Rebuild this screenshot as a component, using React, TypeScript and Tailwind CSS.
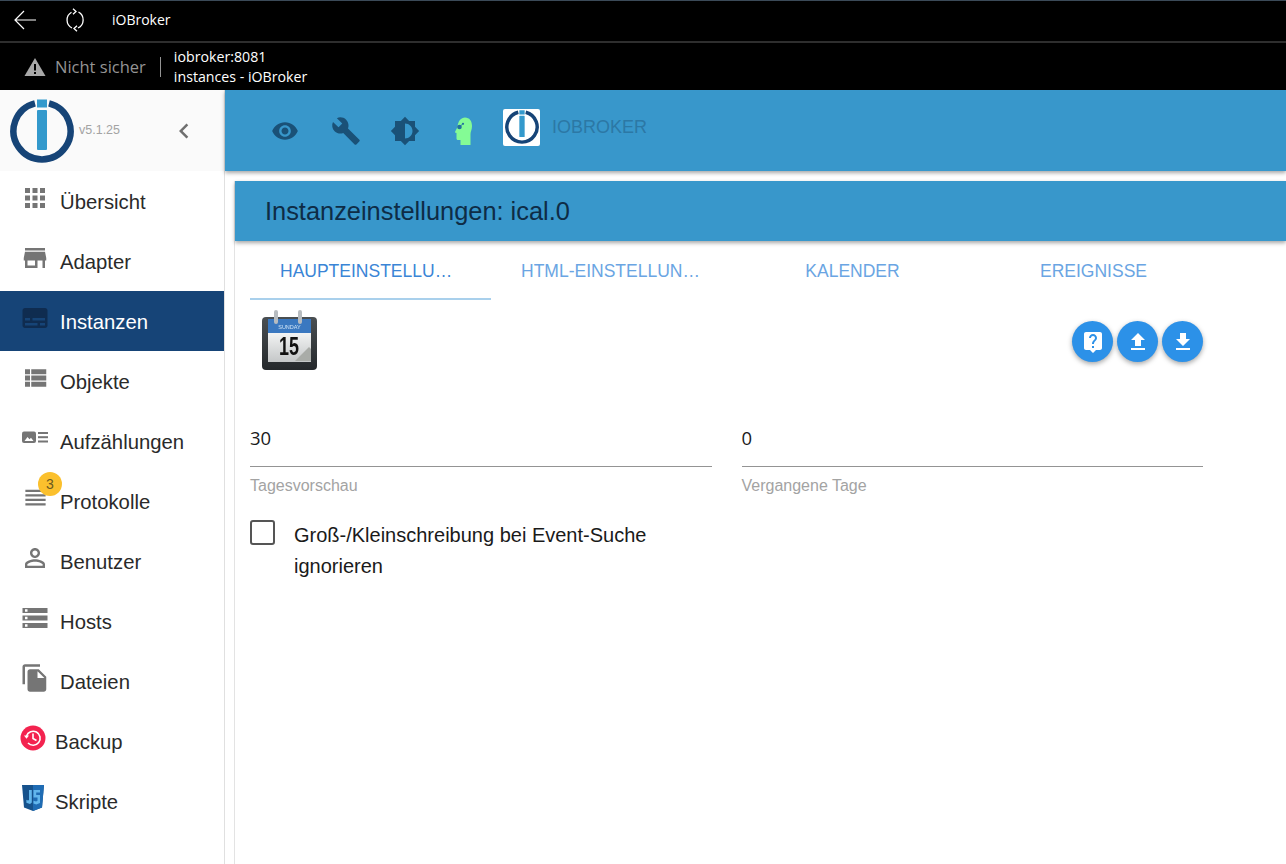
import React from "react";

const P = {
  eye: "M12 4.5C7 4.5 2.73 7.61 1 12c1.73 4.39 6 7.5 11 7.5s9.27-3.11 11-7.5c-1.73-4.39-6-7.5-11-7.5zM12 17c-2.76 0-5-2.24-5-5s2.24-5 5-5 5 2.24 5 5-2.24 5-5 5zm0-8c-1.66 0-3 1.34-3 3s1.34 3 3 3 3-1.34 3-3-1.34-3-3-3z",
  build: "M22.7 19l-9.1-9.1c.9-2.3.4-5-1.5-6.9-2-2-5-2.4-7.4-1.3L9 6 6 9 1.6 4.7C.4 7.1.9 10.1 2.9 12.1c1.9 1.9 4.6 2.4 6.9 1.5l9.1 9.1c.4.4 1 .4 1.4 0l2.3-2.3c.5-.4.5-1.1.1-1.4z",
  bright: "M20 15.31L23.31 12 20 8.69V4h-4.69L12 .69 8.69 4H4v4.69L.69 12 4 15.31V20h4.69L12 23.31 15.31 20H20v-4.69zM12 18V6c3.31 0 6 2.69 6 6s-2.69 6-6 6z",
  apps: "M4 8h4V4H4v4zm6 12h4v-4h-4v4zm-6 0h4v-4H4v4zm0-6h4v-4H4v4zm6 0h4v-4h-4v4zm6-10v4h4V4h-4zm-6 4h4V4h-4v4zm6 6h4v-4h-4v4zm0 6h4v-4h-4v4z",
  store: "M20 4H4v2h16V4zm1 10v-2l-1-5H4l-1 5v2h1v6h10v-6h4v6h2v-6h1zm-9 4H6v-4h6v4z",
  subtitles: "M20 4H4c-1.1 0-2 .9-2 2v12c0 1.1.9 2 2 2h16c1.1 0 2-.9 2-2V6c0-1.1-.9-2-2-2zM4 12h4v2H4v-2zm10 6H4v-2h10v2zm6 0h-4v-2h4v2zm0-4H10v-2h10v2z",
  list: "M4 14h4v-4H4v4zm0 5h4v-4H4v4zM4 9h4V5H4v4zm5 5h12v-4H9v4zm0 5h12v-4H9v4zM9 5v4h12V5H9z",
  reorder: "M3 15h18v-2H3v2zm0 4h18v-2H3v2zm0-8h18V9H3v2zm0-6v2h18V5H3z",
  person: "M12 5.9c1.16 0 2.1.94 2.1 2.1s-.94 2.1-2.1 2.1S9.9 9.16 9.9 8s.94-2.1 2.1-2.1m0 9c2.97 0 6.1 1.46 6.1 2.1v1.1H5.9V17c0-.64 3.13-2.1 6.1-2.1M12 4C9.79 4 8 5.79 8 8s1.79 4 4 4 4-1.79 4-4-1.79-4-4-4zm0 9c-2.67 0-8 1.34-8 4v3h16v-3c0-2.66-5.33-4-8-4z",
  storage: "M2 20h20v-4H2v4zm2-3h2v2H4v-2zM2 4v4h20V4H2zm4 3H4V5h2v2zm-4 7h20v-4H2v4zm2-3h2v2H4v-2z",
  file: "M16 1H4c-1.1 0-2 .9-2 2v14h2V3h12V1zm-1 4l6 6v10c0 1.1-.9 2-2 2H7.99C6.89 23 6 22.1 6 21l.01-14c0-1.1.89-2 1.99-2h7zm-1 7h5.5L14 6.5V12z",
  publish: "M9 16h6v-6h4l-7-7-7 7h4zm-4 2h14v2H5z",
  download: "M19 9h-4V3H9v6H5l7 7 7-7zM5 18v2h14v-2H5z",
  help: "M19 2H5c-1.11 0-2 .9-2 2v14c0 1.1.89 2 2 2h4l3 3 3-3h4c1.1 0 2-.9 2-2V4c0-1.1-.9-2-2-2zm-6 16h-2v-2h2v2zm2.07-7.75l-.9.92C13.45 11.9 13 12.5 13 14h-2v-.5c0-1.1.45-2.1 1.17-2.83l1.24-1.26c.37-.36.59-.86.59-1.41 0-1.1-.9-2-2-2s-2 .9-2 2H8c0-2.21 1.79-4 4-4s4 1.79 4 4c0 .88-.36 1.68-.93 2.25z",
  chevron: "M15.41 7.41L14 6l-6 6 6 6 1.41-1.41L10.83 12z",
};

function I({ d, className }: { d: string; className?: string }) {
  return (
    <svg viewBox="0 0 24 24" className={className} fill="currentColor">
      <path d={d} />
    </svg>
  );
}

function Logo({ className }: { className?: string }) {
  return (
    <svg viewBox="0 0 64 64" className={className}>
      <path d="M25 4.3 A28.5 28.5 0 1 0 39 4.3" fill="none" stroke="#164477" strokeWidth="6.5" />
      <rect x="27" y="0.5" width="10" height="8" fill="#3399cc" />
      <rect x="27" y="11" width="10" height="40" rx="1" fill="#3399cc" />
    </svg>
  );
}

function Enums({ className }: { className?: string }) {
  return (
    <svg viewBox="0 0 26 13" className={className}>
      <rect x="0" y="0.5" width="14" height="11.5" rx="2" fill="#757575" />
      <path d="M2.5 10l3-4 2 2.2 1.5-1.4 2.5 3.2z" fill="#fff" />
      <rect x="16" y="1" width="10" height="2" fill="#757575" />
      <rect x="16" y="5.2" width="10" height="2" fill="#757575" />
      <rect x="16" y="9.5" width="10" height="2" fill="#757575" />
    </svg>
  );
}

function BackupIcon({ className }: { className?: string }) {
  return (
    <svg viewBox="0 0 26 26" className={className}>
      <circle cx="13" cy="13" r="12.5" fill="#f3234f" />
      <path d="M6.5 11 A7 7 0 1 1 8 18" fill="none" stroke="#fff" strokeWidth="1.6" />
      <path d="M4 10.5h5l-2.5 3.2z" fill="#fff" />
      <path d="M13 8.5v5l3.5 2" fill="none" stroke="#fff" strokeWidth="1.6" />
    </svg>
  );
}

function JsIcon({ className }: { className?: string }) {
  return (
    <svg viewBox="0 0 22 26" className={className}>
      <path d="M0 0h22l-2 22.5L11 26 2 22.5z" fill="#16528c" />
      <path d="M11 0h11l-2 22.5L11 26z" fill="#1f6cb4" />
      <path d="M9.8 5v12.5l-1.8 1.5-3.6-1.2v-3l1.6.8 1-.6V5z" fill="#62b6ec" />
      <path d="M18 5h-6.5v7.5h4v3.2l-1.4.9-2.6-.9v2.7l2.8 1.2L18 18v-8h-3.8V7.5H18z" fill="#62b6ec" />
    </svg>
  );
}

function HeadIcon({ className }: { className?: string }) {
  return (
    <svg viewBox="0 0 17 28" className={className}>
      <path d="M10 .5C14.5.5 17 4 17 9c0 4-1.5 5.5-1.5 8v11H5.5v-5H3c-1 0-1.5-.6-1.5-1.5V16L0 15.5c-.3-.2 0-.7.2-1L2.5 10C3 4 6 .5 10 .5z" fill="#84fb95" />
      <circle cx="4.5" cy="10" r="2.3" fill="#22709f" />
      <circle cx="8" cy="6.8" r="1.1" fill="#22709f" />
      <path d="M5.5 8.5l2-1" stroke="#22709f" strokeWidth="0.8" />
    </svg>
  );
}

function CalendarIcon() {
  return (
    <svg viewBox="0 0 60 60" className="w-[60px] h-[60px] blur-[0.4px]">
      <defs>
        <linearGradient id="calBody" x1="0" y1="0" x2="0" y2="1">
          <stop offset="0" stopColor="#4a4f52" />
          <stop offset="1" stopColor="#24282b" />
        </linearGradient>
        <linearGradient id="calPage" x1="0" y1="0" x2="0" y2="1">
          <stop offset="0" stopColor="#f2f3f3" />
          <stop offset="1" stopColor="#c4c7c8" />
        </linearGradient>
      </defs>
      <rect x="2" y="7" width="55" height="53" rx="4" fill="url(#calBody)" />
      <rect x="8" y="23" width="43" height="29" fill="url(#calPage)" />
      <rect x="8" y="9" width="43" height="14" fill="#3a78c0" />
      <text x="29.5" y="19" textAnchor="middle" fontSize="5.5" fill="#cfe3f5" fontFamily="Liberation Sans, sans-serif">SUNDAY</text>
      <rect x="14" y="0" width="4" height="14" rx="2" fill="#b7bcc0" />
      <rect x="38" y="0" width="4" height="14" rx="2" fill="#b7bcc0" />
      <text x="19" y="45" fontSize="25" fontWeight="700" fill="#111" textLength="20" lengthAdjust="spacingAndGlyphs" fontFamily="Liberation Sans, sans-serif">15</text>
      <path d="M35 51l14-14 2 2v12z" fill="#a9aca8" />
    </svg>
  );
}

const items: { label: string; icon: React.ReactNode; tight?: boolean; active?: boolean; badge?: string }[] = [
  { label: "Übersicht", icon: <I d={P.apps} className="w-[30px] h-[30px]" /> },
  { label: "Adapter", icon: <I d={P.store} className="w-[30px] h-[30px]" /> },
  { label: "Instanzen", active: true, icon: <I d={P.subtitles} className="w-[30px] h-[30px] text-[#0f2c50]" /> },
  { label: "Objekte", icon: <I d={P.list} className="w-[30px] h-[30px]" /> },
  { label: "Aufzählungen", icon: <Enums className="w-[26px] h-[13px]" /> },
  { label: "Protokolle", badge: "3", icon: <I d={P.reorder} className="w-[27px] h-[27px]" /> },
  { label: "Benutzer", icon: <I d={P.person} className="w-[30px] h-[30px]" /> },
  { label: "Hosts", icon: <I d={P.storage} className="w-[30px] h-[30px]" /> },
  { label: "Dateien", icon: <I d={P.file} className="w-[30px] h-[30px]" /> },
  { label: "Backup", tight: true, icon: <BackupIcon className="w-[26px] h-[26px]" /> },
  { label: "Skripte", tight: true, icon: <JsIcon className="w-[22px] h-[26px]" /> },
];

function FieldBox({ value, label }: { value: string; label: string }) {
  return (
    <div className="flex-1 min-w-0">
      <div className="h-[62px] border-b border-[#949494] pt-[21px] text-[18.5px] leading-[24px] text-[#1a1a1a] font-['Open_Sans','Noto_Sans',sans-serif]">
        {value}
      </div>
      <div className="mt-[9px] text-[16px] leading-[20px] text-[#a3a3a3]">{label}</div>
    </div>
  );
}

function Fab({ d, size }: { d: string; size: string }) {
  return (
    <div className="w-[41px] h-[41px] rounded-full bg-[#2c91e8] text-white flex items-center justify-center shadow-[0_2px_5px_rgba(0,0,0,0.35)]">
      <I d={d} className={size} />
    </div>
  );
}

const tabs = ["Haupteinstellungen", "HTML-Einstellungen", "Kalender", "Ereignisse"];

export default function App() {
  return (
    <div className="h-screen w-full overflow-hidden flex flex-col bg-white font-['Liberation_Sans',Arial,sans-serif]">
      <div className="h-[90px] shrink-0 bg-black text-white font-['Open_Sans','Noto_Sans',sans-serif] flex flex-col">
        <div className="h-px bg-[#3b4a58]" />
        <div className="h-[40px] flex items-center">
          <svg viewBox="0 0 24 24" className="ml-[13px] w-[24px] h-[24px] mt-[-2px]" fill="none" stroke="#fff" strokeWidth="1.2">
            <path d="M23 12H2M11 3l-9 9 9 9" />
          </svg>
          <svg viewBox="0 0 24 24" className="ml-[26px] w-[24px] h-[24px] mt-[-2px]" fill="none" stroke="#fff" strokeWidth="1.3">
            <path d="M8.5 4.2A9 9 0 0 0 9 20M15.5 4A9 9 0 0 1 15 20" />
            <path d="M10 .8L13 3.5 10 6.2M14 23.2L11 20.5 14 17.8" />
          </svg>
          <span className="ml-[25px] text-[14px] mt-[-3px]">iOBroker</span>
        </div>
        <div className="h-[2px] bg-[#2e2e2e]" />
        <div className="h-[47px] flex items-center">
          <svg viewBox="0 0 22 20" className="ml-[24px] w-[22px] h-[20px]">
            <path d="M11 1L21.5 19H.5z" fill="#a8a8a8" />
            <rect x="10" y="7" width="2" height="6.5" fill="#000" />
            <rect x="10" y="15" width="2" height="2" fill="#000" />
          </svg>
          <span className="ml-[9px] mt-[2px] text-[16.5px] text-[#949494]">Nicht sicher</span>
          <span className="ml-[14px] w-px h-[20px] bg-[#949494]" />
          <div className="ml-[13px] text-[14.2px] leading-[20px]">
            <div>iobroker:8081</div>
            <div>instances - iOBroker</div>
          </div>
        </div>
      </div>

      <div className="flex-1 flex min-h-0">
        <aside className="w-[225px] shrink-0 border-r border-[#e0e0e0]">
          <div className="h-[81px] bg-[#fafafa] flex items-center">
            <Logo className="ml-[10px] w-[64px] h-[64px]" />
            <span className="ml-[5px] text-[12.5px] text-[#a3a3a3] mb-[1px]">v5.1.25</span>
            <I d={P.chevron} className="ml-[49px] w-[30px] h-[30px] text-[#6f6f6f]" />
          </div>
          {items.map((it) => (
            <div
              key={it.label}
              className={`relative h-[60px] flex items-center text-[20.3px] ${it.active ? "bg-[#164477] text-white" : "text-[#2a2a2a]"}`}
            >
              {it.tight ? (
                <div className="w-[55px] shrink-0 flex justify-center pl-[10px] mb-[6px] text-[#757575]">{it.icon}</div>
              ) : (
                <div className="w-[60px] shrink-0 flex justify-center pl-[10px] mb-[7px] text-[#757575]">{it.icon}</div>
              )}
              <span className="mt-[2px]">{it.label}</span>
              {it.badge && (
                <span className="absolute left-[38px] top-[1px] w-[24px] h-[24px] rounded-full bg-[#fbc02d] text-[#6b5a20] text-[14px] flex items-center justify-center">
                  {it.badge}
                </span>
              )}
            </div>
          ))}
        </aside>

        <main className="flex-1 min-w-0 flex flex-col">
          <div className="h-[81px] shrink-0 bg-[#3897cb] shadow-[0_2px_4px_rgba(0,0,0,0.35)] flex items-center relative z-10 text-[#1a5177]">
            <I d={P.eye} className="ml-[46px] w-[28px] h-[28px]" />
            <I d={P.build} className="ml-[32px] w-[30px] h-[30px]" />
            <I d={P.bright} className="ml-[29px] w-[30px] h-[30px]" />
            <HeadIcon className="ml-[35px] w-[17px] h-[28px]" />
            <div className="ml-[31px] mb-[7px] w-[37px] h-[37px] bg-white rounded-[2px] flex items-center justify-center">
              <Logo className="w-[34px] h-[34px]" />
            </div>
            <span className="ml-[12px] mb-[7px] text-[18px] text-[#2c78a5]">IOBROKER</span>
          </div>

          <div className="flex-1 min-h-0 pt-[10px] pl-[10px]">
            <div className="h-full shadow-[-1px_0_0_#e3e3e3]">
              <div className="h-[60px] bg-[#3897cb] shadow-[0_2px_4px_rgba(0,0,0,0.35)] flex items-center pl-[30px] text-[25.4px] text-[#0e2c46] relative">
                Instanzeinstellungen: ical.0
              </div>
              <div className="pl-[15px]">
                <div className="flex h-[59px] w-[964px]">
                  {tabs.map((t, i) => (
                    <div
                      key={t}
                      className={`w-[241px] shrink-0 px-[30px] pt-[20px] text-[17.5px] leading-[20px] uppercase text-center ${i === 0 ? "text-[#3a85d6] border-b-2 border-[#a9d0ec]" : "text-[#6aa5e3]"}`}
                    >
                      <div className="truncate">{t}</div>
                    </div>
                  ))}
                </div>
                <div className="w-[953px] flex justify-between h-[105px]">
                  <div className="ml-[10px] mt-[10px]">
                    <CalendarIcon />
                  </div>
                  <div className="flex gap-[4px] mt-[21px]">
                    <Fab d={P.help} size="w-[24px] h-[24px]" />
                    <Fab d={P.publish} size="w-[24px] h-[24px]" />
                    <Fab d={P.download} size="w-[24px] h-[24px]" />
                  </div>
                </div>
                <div className="flex gap-[30px] w-[953px]">
                  <FieldBox value="30" label="Tagesvorschau" />
                  <FieldBox value="0" label="Vergangene Tage" />
                </div>
                <div className="flex items-start mt-[24px] w-[453px]">
                  <div className="w-[25px] h-[25px] border-2 border-[#555] rounded-[3px] shrink-0" />
                  <div className="ml-[19px] text-[20px] leading-[31px] text-[#1a1a1a]">
                    Groß-/Kleinschreibung bei Event-Suche ignorieren
                  </div>
                </div>
              </div>
            </div>
          </div>
        </main>
      </div>
    </div>
  );
}
